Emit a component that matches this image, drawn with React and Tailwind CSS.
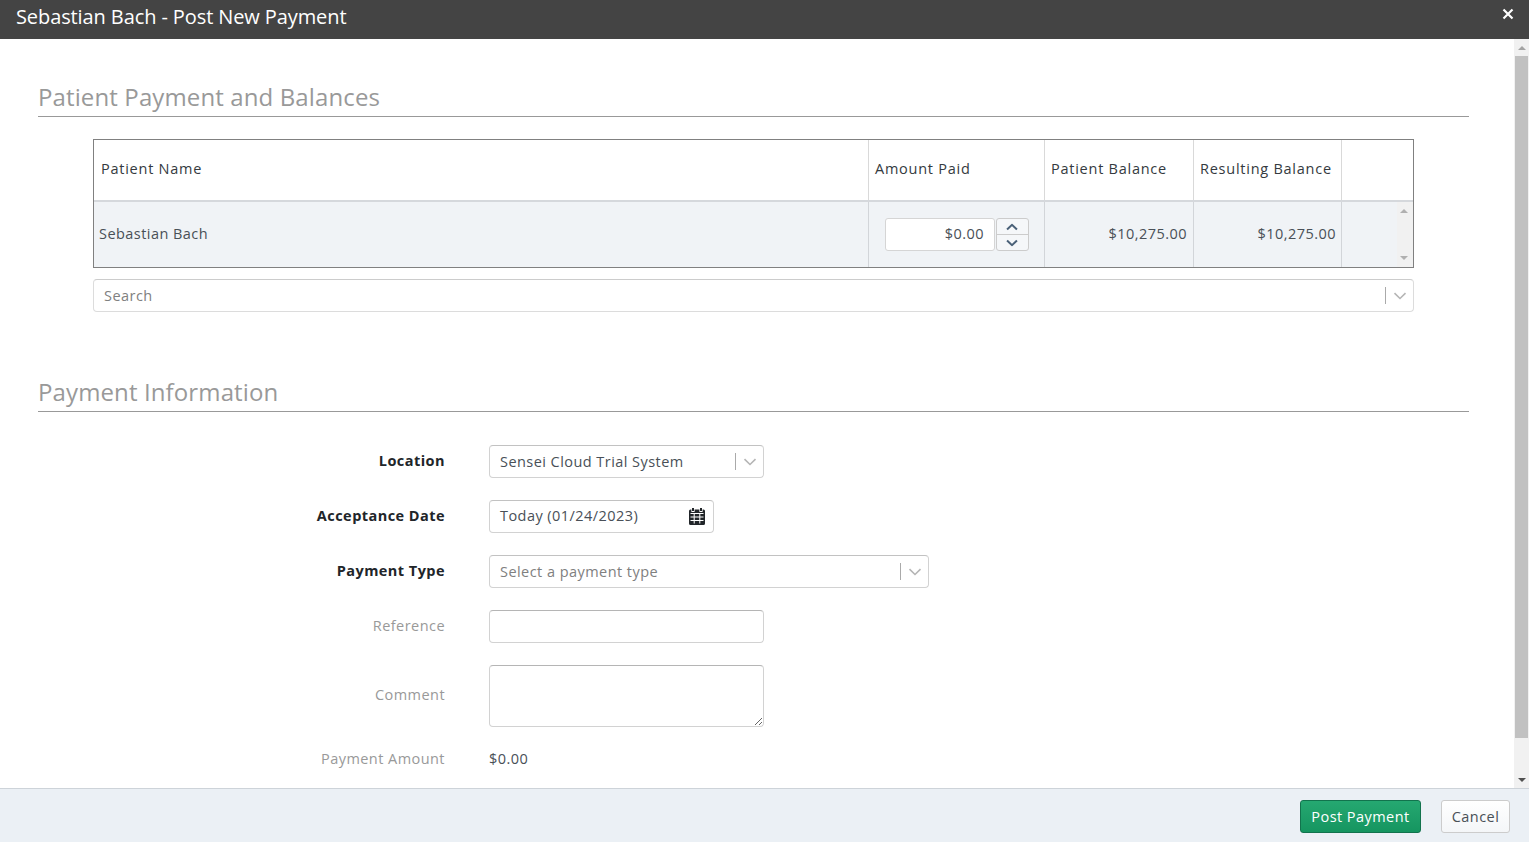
function Chevron({ className, weight = "1.6" }) {
  return (
    <svg width="14" height="8" viewBox="0 0 14 8" fill="none" stroke="currentColor" strokeWidth={weight} className={className}>
      <path d="M1.5 1.2 7 6.5l5.5-5.3" />
    </svg>
  );
}

function CalendarIcon() {
  return (
    <svg width="16" height="17" viewBox="0 0 16 17" className="text-[#212529]">
      <path fill="currentColor" d="M3 0h2v3H3zM11 0h2v3h-2zM1.5 1.5h.9V4h3.2V1.5h4.8V4h3.2V1.5h.9A1.5 1.5 0 0 1 16 3v12.5a1.5 1.5 0 0 1-1.5 1.5h-13A1.5 1.5 0 0 1 0 15.5V3a1.5 1.5 0 0 1 1.5-1.5Z" />
      <path stroke="#fff" strokeWidth="1" d="M1.5 5.5h13M1.5 9h13M1.5 12.5h13M5.2 5.5v10M10.8 5.5v10" />
    </svg>
  );
}

function SelectBox({ width, placeholder, lighter, children }) {
  return (
    <div className={`${width} h-[33px] flex items-center pl-[10px] pr-[6px] bg-white border rounded-[4px] ${lighter ? "border-[#dcdcdc] border-t-[#ccc]" : "border-[#d2d2d2] border-t-[#c2c2c2]"}`}>
      <span className={`flex-1 ${placeholder ? "text-[#808080]" : "text-[#495057]"}`}>{children}</span>
      <span className="w-px h-[17px] bg-[#aaa] mr-[7px]"></span>
      <Chevron className="text-[#b5b5b5]" />
    </div>
  );
}

function FormRow({ label, strong, className, children }) {
  return (
    <div className={`flex items-center gap-[44px] ${className}`}>
      <div className={`w-[407px] text-right pb-[2px] ${strong ? "font-bold text-[#212529]" : "text-[#999]"}`}>{label}</div>
      {children}
    </div>
  );
}

function SectionTitle({ children, className }) {
  return (
    <h2 className={`text-[24px] leading-[33px] tracking-[0.12px] text-[#999] border-b border-[#999] pb-[3px] ${className}`}>{children}</h2>
  );
}

export default function App() {
  return (
    <div className="h-[842px] flex flex-col bg-white overflow-hidden text-[14.5px] tracking-[0.45px] text-[#212529] font-['Open_Sans',sans-serif]">
      <div className="h-[39px] shrink-0 flex justify-between bg-[#444] text-white">
        <div className="pl-[16px] pt-[3px] text-[20px] leading-[27px] tracking-[-0.1px]">Sebastian Bach - Post New Payment</div>
        <svg width="12" height="12" viewBox="0 0 12 12" stroke="currentColor" strokeWidth="2.2" className="mt-[8px] mr-[15px]">
          <path d="M1.5 1.5l9 9M10.5 1.5l-9 9" />
        </svg>
      </div>

      <div className="flex-1 min-h-0 flex">
        <div className="flex-1 pl-[38px] pr-[45px] pt-[41px]">
          <SectionTitle>Patient Payment and Balances</SectionTitle>

          <div className="mx-[55px] mt-[22px] border border-[#808080] flex flex-col">
            <div className="h-[62px] flex border-b-2 border-[#d5d8dc] font-medium tracking-[0.75px] text-[#343a40]">
              <div className="w-[775px] flex items-center pl-[7px] pb-[2px] border-r border-[#d9d9d9]">Patient Name</div>
              <div className="w-[176px] flex items-center pl-[6px] pb-[2px] border-r border-[#d9d9d9]">Amount Paid</div>
              <div className="w-[149px] flex items-center pl-[6px] pb-[2px] border-r border-[#d9d9d9]">Patient Balance</div>
              <div className="w-[148px] flex items-center pl-[6px] pb-[2px] border-r border-[#d9d9d9]">Resulting Balance</div>
              <div className="flex-1"></div>
            </div>
            <div className="h-[65px] flex bg-[#f0f3f6] text-[#495057]">
              <div className="w-[775px] flex items-center pl-[5px] pb-[2px] border-r border-[#d2d5d9]">Sebastian Bach</div>
              <div className="w-[176px] flex items-center pl-[16px] border-r border-[#d2d5d9]">
                <div className="w-[110px] h-[33px] flex items-center justify-end pr-[10px] pb-[2px] bg-white border border-[#d5d5d5] rounded-[3px]">$0.00</div>
                <div className="w-[33px] h-[33px] ml-px flex flex-col items-center border border-[#ccc] rounded-[3px] text-[#4a6178] bg-[#f5f7f9]">
                  <div className="flex-1 w-full flex items-center justify-center pr-px border-b border-[#ccc]">
                    <Chevron weight="2.2" className="rotate-180 scale-90" />
                  </div>
                  <div className="flex-1 flex items-center justify-center pr-px">
                    <Chevron weight="2.2" className="scale-90" />
                  </div>
                </div>
              </div>
              <div className="w-[149px] flex items-center justify-end pr-[6px] pb-[2px] border-r border-[#d2d5d9]">$10,275.00</div>
              <div className="w-[148px] flex items-center justify-end pr-[5px] pb-[2px] border-r border-[#d2d5d9]">$10,275.00</div>
              <div className="flex-1 flex justify-end">
                <div className="w-[16px] pr-[2px] bg-[#f1f1f1] flex flex-col items-center justify-between py-[7px]">
                  <span className="border-x-[4px] border-x-transparent border-b-[4px] border-b-[#b0b0b0]"></span>
                  <span className="border-x-[4px] border-x-transparent border-t-[4px] border-t-[#b0b0b0]"></span>
                </div>
              </div>
            </div>
          </div>

          <div className="mx-[55px] mt-[11px]">
            <SelectBox width="w-full" placeholder lighter>Search</SelectBox>
          </div>

          <SectionTitle className="mt-[63px]">Payment Information</SectionTitle>

          <FormRow label="Location" strong className="mt-[33px]">
            <SelectBox width="w-[275px]">Sensei Cloud Trial System</SelectBox>
          </FormRow>
          <FormRow label="Acceptance Date" strong className="mt-[22px]">
            <div className="w-[225px] h-[33px] flex items-center justify-between pl-[10px] pr-[8px] border border-[#d2d2d2] border-t-[#c2c2c2] rounded-[4px] text-[#495057]">
              <span className="pb-[2px]">Today (01/24/2023)</span>
              <CalendarIcon />
            </div>
          </FormRow>
          <FormRow label="Payment Type" strong className="mt-[22px]">
            <SelectBox width="w-[440px]" placeholder>Select a payment type</SelectBox>
          </FormRow>
          <FormRow label="Reference" className="mt-[22px]">
            <input className="w-[275px] h-[33px] border border-[#d2d2d2] border-t-[#b5b5b5] rounded-[4px] outline-none" />
          </FormRow>
          <FormRow label="Comment" className="mt-[22px]">
            <textarea className="block w-[275px] h-[62px] border border-[#d2d2d2] border-t-[#b5b5b5] rounded-[4px] outline-none"></textarea>
          </FormRow>
          <FormRow label="Payment Amount" className="mt-[21px]">
            <span className="pb-[2px] text-[#495057]">$0.00</span>
          </FormRow>
        </div>

        <div className="w-[15px] shrink-0 bg-[#f1f1f1] flex flex-col items-center">
          <div className="h-[17px] flex items-center justify-center">
            <span className="border-x-[4px] border-x-transparent border-b-[4px] border-b-[#a3a3a3]"></span>
          </div>
          <div className="w-[13px] h-[682px] bg-[#c1c1c1]"></div>
          <div className="flex-1 flex items-end pb-[6px]">
            <span className="border-x-[4px] border-x-transparent border-t-[4px] border-t-[#505050]"></span>
          </div>
        </div>
      </div>

      <div className="h-[54px] shrink-0 flex items-center justify-end gap-[20px] pr-[19px] pt-[2px] bg-[#ebf0f5] border-t border-[#cdd3d9]">
        <button className="w-[121px] h-[33px] pt-px rounded-[3px] border border-[#12734d] bg-gradient-to-b from-[#25a871] to-[#159560] text-white">Post Payment</button>
        <button className="w-[69px] h-[33px] pt-px rounded-[3px] border border-[#ccc] bg-gradient-to-b from-white to-[#f4f6f8] text-[#495057]">Cancel</button>
      </div>
    </div>
  );
}
